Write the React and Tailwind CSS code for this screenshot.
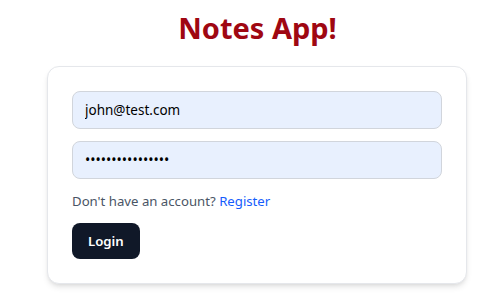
export default function App() {
  return (
    <div className="min-h-[307px] w-[497px] bg-white pl-[47px] pt-[10px]" style={{ fontFamily: '"Noto Sans", "Open Sans", sans-serif' }}>
      <div className="w-[420px]">
        <h1 className="text-center text-[29px] leading-9 font-bold text-red-800 mb-5 pl-[1px]">Notes App!</h1>
        <div className="rounded-xl border border-gray-200 bg-white p-6 shadow-md">
          <div className="flex flex-col gap-3">
            <input
              readOnly
              value="john@test.com"
              className="w-full rounded-lg border border-gray-300 bg-[#e8f0fe] px-3 py-2 text-[13.5px] leading-5 text-black outline-none"
            />
            <input
              readOnly
              type="password"
              value="passwordpassword"
              className="w-full rounded-lg border border-gray-300 bg-[#e8f0fe] px-3 py-2 text-sm text-black outline-none"
            />
            <p className="text-[13.2px] leading-5 text-gray-600">
              Don't have an account? <span className="text-blue-600">Register</span>
            </p>
            <div>
              <button className="rounded-lg bg-gray-900 px-4 py-2 text-[13.2px] leading-5 font-semibold text-white">Login</button>
            </div>
          </div>
        </div>
      </div>
    </div>
  );
}
